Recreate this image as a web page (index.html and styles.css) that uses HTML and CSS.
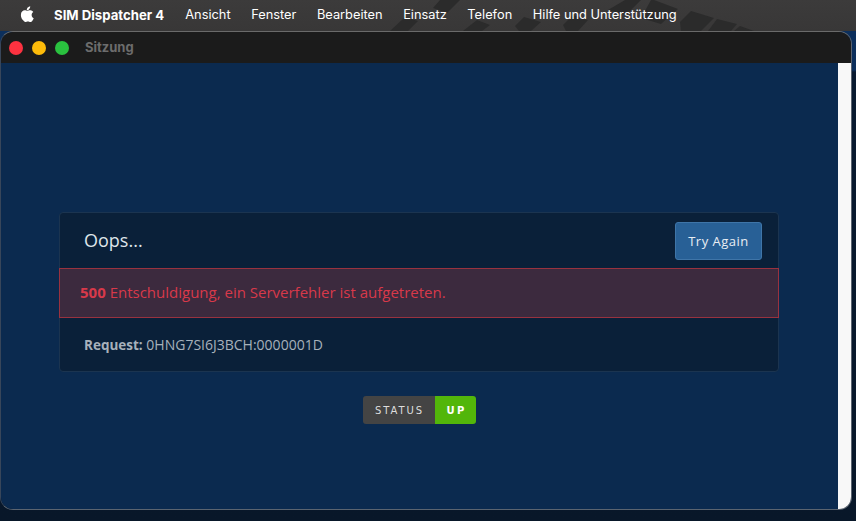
FILE: index.html
```html
<!DOCTYPE html>
<html lang="de">
<head>
<meta charset="utf-8">
<title>Sitzung</title>
<link rel="stylesheet" href="styles.css">
</head>
<body>
<div class="desktop">
  <svg class="wallpaper" width="856" height="32" viewBox="0 0 856 32" aria-hidden="true">
    <g fill="#2b2b2b">
      <path d="M390 31l15-14 13 4-10 10z"/>
      <path d="M440 0h20l-13 13-14-5z"/>
      <path d="M463 31l14-11 13 5-8 6z"/>
      <path d="M515 26l9-9 17 5-10 9h-12z"/>
      <path d="M563 25l10-10 15 5-10 11h-12z"/>
      <path d="M608 10l17-10h16l-15 15z"/>
      <path d="M651 0h3l24 9-17 15-20-6z"/>
      <path d="M691 11l23 7-13 13h-20l-1-9z"/>
      <path d="M717 19l20 5-6 7h-23z"/>
      <path d="M740 26l14 5h-20z"/>
    </g>
  </svg>
  <nav class="menubar">
    <svg class="apple" width="14" height="17" viewBox="0 0 14 17" aria-hidden="true">
      <path fill="#fff" d="M10.2 0.2c.1 1-.3 2-.9 2.700-.6.8-1.600 1.400-2.500 1.300-.1-1 .4-2 .9-2.600C8.300.9 9.400.3 10.200.2zM13.300 5.900c-.1.1-1.700 1-1.700 3 0 2.300 2 3.100 2.100 3.100 0 .1-.3 1.100-1 2.200-.6.900-1.300 1.800-2.300 1.800s-1.300-.6-2.500-.6-1.600.6-2.500.6c-1 0-1.700-.9-2.400-1.900C1.600 12.900.9 10.800.9 8.900c0-3 2-4.600 3.900-4.600 1 0 1.900.7 2.500.7.600 0 1.600-.7 2.800-.7.400 0 2.100 0 3.200 1.600z"/>
    </svg>
    <span class="menu-item app-name">SIM Dispatcher 4</span>
    <span class="menu-item">Ansicht</span>
    <span class="menu-item">Fenster</span>
    <span class="menu-item">Bearbeiten</span>
    <span class="menu-item">Einsatz</span>
    <span class="menu-item">Telefon</span>
    <span class="menu-item">Hilfe und Unterstützung</span>
  </nav>
  <section class="window">
    <header class="titlebar">
      <span class="light red"></span>
      <span class="light yellow"></span>
      <span class="light green"></span>
      <span class="window-title">Sitzung</span>
    </header>
    <div class="window-body">
      <main class="content">
        <div class="card">
          <div class="card-header">
            <h1 class="card-title">Oops...</h1>
            <button class="btn" type="button">Try Again</button>
          </div>
          <div class="alert"><strong>500</strong> Entschuldigung, ein Serverfehler ist aufgetreten.</div>
          <div class="card-body"><strong>Request:</strong> 0HNG7SI6J3BCH:0000001D</div>
        </div>
        <div class="status"><span class="status-label">STATUS</span><span class="status-value">UP</span></div>
      </main>
      <div class="scrollbar"></div>
    </div>
  </section>
</div>
</body>
</html>
```
FILE: styles.css
```css
* { box-sizing: border-box; }
html, body { margin: 0; padding: 0; }
body { width: 856px; height: 521px; overflow: hidden; background: #0a1a30; font-family: "Open Sans", sans-serif; }
.desktop {
  position: relative;
  width: 856px;
  height: 521px;
  overflow: hidden;
  background: linear-gradient(to bottom, #3c3b3b 0, #383737 31px, #0c2f5c 31px, #0c2f5c 70px, #091a30 72px, #081729 100%);
}
.wallpaper { position: absolute; left: 0; top: 0; }
.menubar {
  position: relative;
  height: 31px;
  display: flex;
  align-items: center;
  font-family: Inter, "Liberation Sans", sans-serif;
  font-size: 12.8px;
  color: #fff;
  padding: 0 0 2px 20px;
}
.apple { margin-right: 20px; }
.menu-item { margin-right: 20.6px; white-space: nowrap; }
.app-name { font-weight: 700; font-size: 13.2px; margin-right: 21px; }
.window {
  width: 852px;
  height: 479px;
  border-radius: 13px;
  overflow: hidden;
  border: 1px solid #5b6470;
  border-top-color: #6a6a6a;
  border-left-color: #38465a;
  display: flex;
  flex-direction: column;
}
.titlebar {
  height: 31px;
  flex: none;
  background: #1b1b1b;
  display: flex;
  align-items: center;
  padding: 0 0 0 8px;
  gap: 9px;
}
.light { width: 14px; height: 14px; border-radius: 50%; }
.red { background: #fc3240; }
.yellow { background: #fdbb0a; }
.green { background: #2ac13f; }
.window-title {
  margin: -2px 0 0 7px;
  font-family: Inter, "Liberation Sans", sans-serif;
  font-weight: 700;
  font-size: 13px;
  color: #6c6c6c;
}
.window-body { flex: 1; display: flex; min-height: 0; }
.content { flex: 1; background: #0b2a4f; padding: 149px 59px 0 58px; }
.scrollbar { width: 13px; flex: none; background: #f8f8f8; }
.card {
  width: 720px;
  height: 160px;
  background: #0a2039;
  border: 1px solid #1b3450;
  border-radius: 4px;
  display: flex;
  flex-direction: column;
}
.card-header {
  height: 55px;
  flex: none;
  display: flex;
  align-items: center;
  justify-content: space-between;
  padding: 0 16px 0 24px;
}
.card-title { margin: -2px 0 0; font-size: 18px; font-weight: 400; color: #dfe5ea; }
.btn {
  width: 87px;
  height: 38px;
  padding: 0;
  background: #286096;
  border: 1px solid #3f75a8;
  border-radius: 3px;
  color: #e8eef4;
  font-family: inherit;
  font-size: 13px;
  letter-spacing: .5px;
}
.alert {
  height: 50px;
  flex: none;
  margin: 0 -1px;
  padding: 0 0 2px 20px;
  display: flex;
  align-items: center;
  white-space: pre;
  background: #3c2a3e;
  border: 1px solid #99323f;
  color: #d8394a;
  font-size: 15px;
}
.alert strong { font-weight: 700; }
.card-body {
  flex: 1;
  display: flex;
  align-items: center;
  white-space: pre;
  padding-left: 24px;
  font-size: 14px;
  color: #a7b1bb;
}
.card-body strong { font-weight: 700; font-size: 13.5px; }
.status {
  display: flex;
  width: 113px;
  height: 28px;
  margin: 24px auto 0;
  border-radius: 3px;
  overflow: hidden;
  font-family: "DejaVu Sans", sans-serif;
  font-size: 10px;
  line-height: 29px;
  text-align: center;
}
.status-label { width: 72px; padding-left: 2px; background: #444; color: #ddd; letter-spacing: 1.9px; }
.status-value { width: 41px; padding-left: 3px; background: #52b60a; color: #fff; font-weight: 700; letter-spacing: 2.4px; }
```
